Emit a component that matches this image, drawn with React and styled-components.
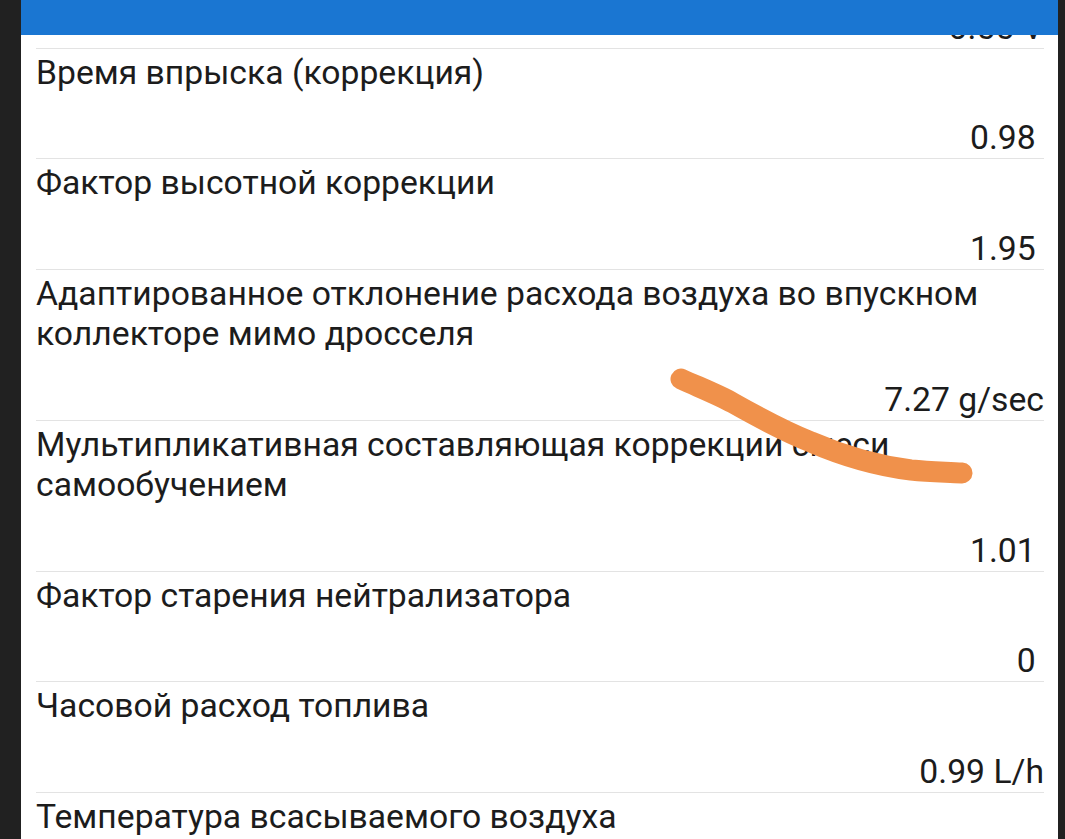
import React from 'react'
import styled, { createGlobalStyle } from 'styled-components'

const GlobalStyle = createGlobalStyle`
  html, body {
    margin: 0;
    padding: 0;
    background: #212121;
    overflow: hidden;
  }
  #root {
    height: 839px;
  }
`

const Frame = styled.div`
  display: flex;
  height: 839px;
  padding-left: 21px;
  padding-right: 7px;
  box-sizing: border-box;
`

const Screen = styled.div`
  position: relative;
  flex: 1;
  display: flex;
  flex-direction: column;
  background: #ffffff;
  overflow: hidden;
  font-family: Roboto, 'Noto Sans', sans-serif;
  color: #1c1c1c;
`

const AppBar = styled.div`
  height: 35px;
  flex-shrink: 0;
  background: #1a76d2;
  position: relative;
  z-index: 1;
`

const Viewport = styled.div`
  flex: 1;
  overflow: hidden;
`

const List = styled.div`
  margin-top: ${({ offset }) => -offset}px;
  padding: 0 14px 0 15px;
`

const Row = styled.div`
  display: flex;
  flex-direction: column;
  padding-top: 4px;
  border-top: 1px solid ${({ first }) => (first ? 'transparent' : '#e3e3e3')};
`

const Label = styled.div`
  font-size: 33.7px;
  line-height: 40.5px;
`

const Value = styled.div`
  margin-top: 24px;
  font-size: 33.7px;
  line-height: 41px;
  text-align: right;
  white-space: pre;
`

const Scribble = styled.svg`
  position: absolute;
  left: 0;
  top: 0;
  pointer-events: none;
`

const rows = [
  { name: 'Напряжение датчика кислорода', value: '0.55', unit: 'V' },
  { name: 'Время впрыска (коррекция)', value: '0.98', unit: '' },
  { name: 'Фактор высотной коррекции', value: '1.95', unit: '' },
  {
    name: 'Адаптированное отклонение расхода воздуха во впускном коллекторе мимо дросселя',
    value: '7.27',
    unit: 'g/sec',
  },
  {
    name: 'Мультипликативная составляющая коррекции смеси самообучением',
    value: '1.01',
    unit: '',
  },
  { name: 'Фактор старения нейтрализатора', value: '0', unit: '' },
  { name: 'Часовой расход топлива', value: '0.99', unit: 'L/h' },
  { name: 'Температура всасываемого воздуха', value: '24', unit: '°C' },
]

export default function App() {
  return (
    <>
      <GlobalStyle />
      <Frame>
        <Screen>
          <AppBar />
          <Viewport>
            <List offset={98}>
              {rows.map((row, i) => (
                <Row key={i} first={i === 0}>
                  <Label>{row.name}</Label>
                  <Value>{`${row.value} ${row.unit}`}</Value>
                </Row>
              ))}
            </List>
          </Viewport>
          <Scribble width="1037" height="839" viewBox="0 0 1037 839">
            <path
              d="M660 379 C 680 388, 700 396, 712 403 C 735 416, 760 430, 790 442 C 820 455, 850 465, 890 470 C 910 472, 925 472, 941 473"
              fill="none"
              stroke="#f0914b"
              strokeWidth="21"
              strokeLinecap="round"
              strokeLinejoin="round"
            />
          </Scribble>
        </Screen>
      </Frame>
    </>
  )
}
